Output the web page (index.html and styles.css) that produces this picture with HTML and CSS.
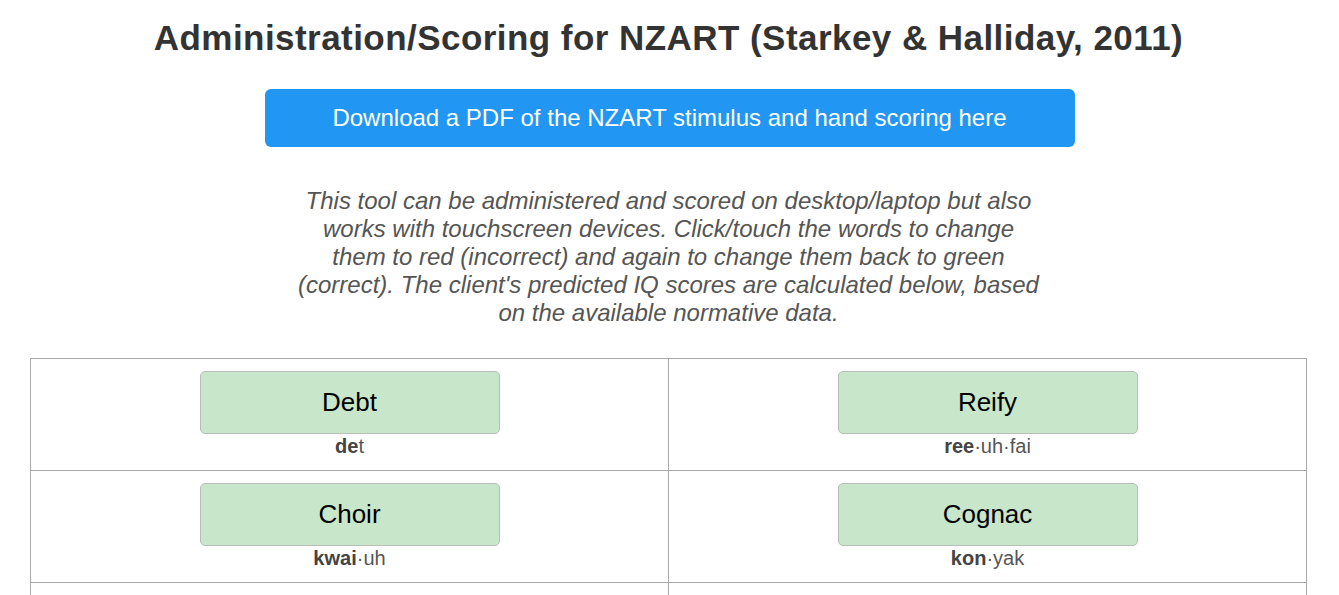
FILE: index.html
```html
<!DOCTYPE html>
<html>
<head>
<meta charset="utf-8">
<link rel="stylesheet" href="styles.css">
</head>
<body>
<h1 class="title">Administration/Scoring for NZART (Starkey &amp; Halliday, 2011)</h1>
<div class="dl-wrap"><a class="dl-btn" href="#">Download a PDF of the NZART stimulus and hand scoring here</a></div>
<p class="intro">This tool can be administered and scored on desktop/laptop but also works with touchscreen devices. Click/touch the words to change them to red (incorrect) and again to change them back to green (correct). The client's predicted IQ scores are calculated below, based on the available normative data.</p>
<div class="grid">
  <div class="cell"><div class="word">Debt</div><div class="pron"><b>de</b>t</div></div>
  <div class="cell"><div class="word">Reify</div><div class="pron"><b>ree</b>·uh·fai</div></div>
  <div class="cell"><div class="word">Choir</div><div class="pron"><b>kwai</b>·uh</div></div>
  <div class="cell"><div class="word">Cognac</div><div class="pron"><b>kon</b>·yak</div></div>
  <div class="cell"><div class="word">Heir</div><div class="pron"><b>eh</b>·uh</div></div>
  <div class="cell"><div class="word">Aisle</div><div class="pron"><b>ail</b></div></div>
</div>
</body>
</html>
```
FILE: styles.css
```css
body {
  margin: 0;
  padding: 0 32px 0 30px;
  font-family: "Liberation Sans", Arial, sans-serif;
  color: #333;
  background: #fff;
}
.title {
  margin: 0;
  padding-top: 16px;
  font-size: 35px;
  letter-spacing: 0.45px;
  line-height: 44px;
  font-weight: bold;
  text-align: center;
  color: #333;
}
.dl-wrap {
  display: flex;
  justify-content: center;
  margin-top: 29px;
  padding-left: 2px;
}
.dl-btn {
  display: flex;
  align-items: center;
  justify-content: center;
  width: 810px;
  height: 58px;
  background: #2196f3;
  color: #fff;
  text-decoration: none;
  font-size: 24px;
  border-radius: 6px;
}
.intro {
  width: 750px;
  margin: 40px auto 0;
  font-style: italic;
  font-size: 24px;
  line-height: 28px;
  color: #555;
  text-align: center;
}
.grid {
  display: grid;
  grid-template-columns: 1fr 1fr;
  margin-top: 31px;
  border-top: 1px solid #aaa;
  border-left: 1px solid #aaa;
}
.cell {
  display: flex;
  flex-direction: column;
  align-items: center;
  height: 112px;
  padding-top: 12px;
  box-sizing: border-box;
  border-right: 1px solid #aaa;
  border-bottom: 1px solid #aaa;
}
.word {
  display: flex;
  align-items: center;
  justify-content: center;
  width: 300px;
  height: 63px;
  box-sizing: border-box;
  background: #c8e6c9;
  border: 1px solid #bbb;
  border-radius: 5px;
  font-size: 26px;
  color: #000;
}
.pron {
  margin-top: 0;
  font-size: 20px;
  line-height: 24px;
  color: #555;
}
.pron b { color: #444; }
```
